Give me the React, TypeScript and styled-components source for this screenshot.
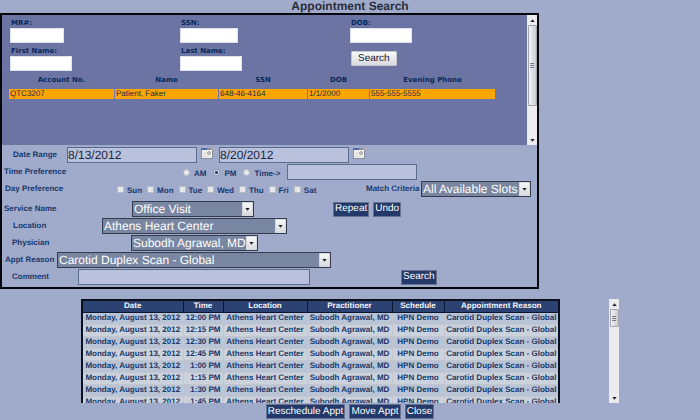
import React, { useId } from "react";
import styled, { createGlobalStyle } from "styled-components";

const GlobalStyle = createGlobalStyle`
  * { box-sizing: border-box; }
  body {
    margin: 0;
    background: #a0abcb;
    font-family: "Liberation Sans", Arial, sans-serif;
    color: #17386b;
    text-rendering: geometricPrecision;
  }
  input, select, button {
    font-family: inherit;
    text-rendering: inherit;
    margin: 0;
  }
`;

const Page = styled.main`
  display: flex;
  flex-direction: column;
`;

const Title = styled.h1`
  margin: 0;
  font-size: 12px;
  line-height: 13px;
  text-align: center;
  color: #2a2e3c;
`;

const SearchPanel = styled.section`
  width: 77%;
  border: 2px solid #05070d;
  padding-bottom: 2px;
`;

const PatientArea = styled.div`
  display: flex;
  height: 130px;
  background: #6b74a2;
`;

const PatientContent = styled.div`
  flex: 1;
  min-width: 0;
  padding: 4px 8px 0;
`;

const PatientForm = styled.form`
  display: grid;
  grid-template-columns: 170px 170px 1fr;
  row-gap: 4px;
`;

const PatientField = styled.div`
  display: flex;
  flex-direction: column;
  align-items: flex-start;
`;

const PatientLabel = styled.label`
  padding-left: 1px;
  font: bold 7px/9px "DejaVu Sans", Verdana, sans-serif;
  color: #06295c;
`;

const PatientInput = styled.input<{ $width: number }>`
  width: ${(p) => p.$width}px;
  height: 15px;
  border: 1px solid #dfe3ee;
  padding: 0 2px;
  background: #fff;
  font-size: 11px;
`;

const LightButton = styled.button`
  align-self: flex-start;
  margin: 4px 0 0 1px;
  height: 15px;
  padding: 0 6px;
  border: 1px solid #c3c6cf;
  border-radius: 1px;
  background: linear-gradient(#f8f8f8, #d8dadd);
  font-size: 10px;
  line-height: 13px;
  color: #10183a;
`;

const PatientTable = styled.table`
  width: 488px;
  margin: 1px 0 0 -2px;
  border-spacing: 1px 3px;
  table-layout: fixed;
  th {
    padding: 0;
    font: bold 7px/11px "DejaVu Sans", Verdana, sans-serif;
    color: #06295c;
  }
  td {
    padding: 0 1px;
    background: #ffa500;
    font-size: 8px;
    line-height: 10px;
    color: #17284f;
    white-space: nowrap;
  }
`;

const Criteria = styled.form`
  display: flex;
  flex-direction: column;
  gap: 1px;
  padding-top: 2px;
`;

const Row = styled.div<{ $indent: number; $gapAbove?: number }>`
  display: flex;
  align-items: center;
  height: 16px;
  padding-left: ${(p) => p.$indent}px;
  margin-top: ${(p) => p.$gapAbove ?? 0}px;
`;

const RowLabel = styled.label<{ $width: number }>`
  flex: none;
  width: ${(p) => p.$width}px;
  font-size: 8px;
  line-height: 10px;
  font-weight: bold;
  white-space: nowrap;
`;

const TextInput = styled.input<{ $width: number }>`
  width: ${(p) => p.$width}px;
  height: 16px;
  border: 1px solid #596d8f;
  padding: 0;
  background: #b9c1dc;
  font-size: 12px;
  color: #20273c;
`;

const CalendarButton = styled.button`
  display: flex;
  align-self: flex-start;
  width: 12px;
  height: 11px;
  padding: 0;
  margin: 1px 6px 0 4px;
  border: 0;
  background: none;
`;

const Options = styled.div<{ $gap: number }>`
  display: flex;
  align-items: center;
  gap: ${(p) => p.$gap}px;
`;

const Option = styled.label<{ $gap: number }>`
  display: flex;
  align-items: center;
  gap: ${(p) => p.$gap}px;
  font-size: 8px;
  line-height: 10px;
  font-weight: bold;
  span { padding-top: 3px; }
`;

const Radio = styled.input.attrs({ type: "radio" })`
  appearance: none;
  width: 7px;
  height: 7px;
  border: 1px solid #b3b7c2;
  border-radius: 50%;
  background: #e9ebef;
  &:checked {
    border-color: #8d9ab8;
    background: radial-gradient(circle, #1b3c6e 0 1px, #dfe6f2 2px);
  }
`;

const Check = styled.input.attrs({ type: "checkbox" })`
  appearance: none;
  width: 7px;
  height: 7px;
  border: 1px solid #b9bcc4;
  background: #e6e7ea;
  &:checked { background: #17386b; }
`;

const SelectBox = styled.div<{ $width: number }>`
  flex: none;
  display: grid;
  grid-template-columns: 1fr 11px;
  width: ${(p) => p.$width}px;
  height: 16px;
  border: 1px solid #343b4c;
  background: #7986a1;
`;

const Select = styled.select`
  grid-area: 1 / 1 / 2 / 3;
  appearance: none;
  width: 100%;
  border: 0;
  padding: 0 0 0 1px;
  background: none;
  font-size: 12px;
  line-height: 14px;
  color: #fff;
`;

const SelectArrow = styled.span`
  grid-area: 1 / 2 / 2 / 3;
  display: flex;
  align-items: center;
  justify-content: center;
  pointer-events: none;
  border: 1px solid #d5d8df;
  background: linear-gradient(#f7f7f8, #d9dbe0);
`;

const NavyButton = styled.button`
  height: 15px;
  padding: 0 1px;
  border: 1px solid #68738f;
  background: #223969;
  font-size: 10px;
  line-height: 12px;
  color: #fff;
  white-space: nowrap;
`;

const ButtonGroup = styled.div<{ $left: number }>`
  display: flex;
  gap: 4px;
  margin-left: ${(p) => p.$left}px;
`;

const MatchGroup = styled.div`
  display: flex;
  align-items: center;
  gap: 3px;
  margin: 0 6px 0 auto;
`;

const Results = styled.section`
  display: flex;
  align-items: flex-start;
  justify-content: space-between;
  height: 104px;
  margin: 10px 81px 0;
  overflow: hidden;
`;

const ResultTable = styled.table`
  width: 479px;
  table-layout: fixed;
  border-collapse: collapse;
  border: 2px solid #0c111d;
  th, td {
    height: 12px;
    padding: 0;
    font-size: 8px;
    line-height: 10px;
    text-align: center;
    white-space: nowrap;
    font-weight: bold;
  }
  th {
    background: #2c4272;
    border: 1px solid #0c1530;
    color: #f4f6fa;
  }
  td {
    border: 1px solid #c5c6cd;
    background: #b9c4d7;
    color: #17386b;
  }
  td:nth-child(2) { text-align: right; padding-right: 2px; }
  tbody tr:nth-child(even) td { background: #cbd2dc; }
`;

const Track = styled.div`
  flex: none;
  align-self: stretch;
  display: flex;
  flex-direction: column;
  align-items: center;
  width: 10px;
  background: #ececef;
`;

const TrackEnd = styled.span<{ $bottom?: boolean }>`
  display: flex;
  align-items: center;
  justify-content: center;
  height: 10px;
  margin-top: ${(p) => (p.$bottom ? "auto" : "0")};
`;

const Thumb = styled.span<{ $height: number }>`
  display: flex;
  align-items: center;
  justify-content: center;
  width: 9px;
  height: ${(p) => p.$height}px;
  border: 1px solid #a2a5ae;
  border-radius: 1px;
  background: linear-gradient(90deg, #f4f4f6, #c9cbd1);
`;

const Footer = styled.footer`
  display: flex;
  justify-content: center;
  gap: 4px;
  padding-top: 1px;
`;

function Arrow({ up }: { up?: boolean }) {
  return (
    <svg width="5" height="3" viewBox="0 0 5 3" aria-hidden="true">
      <path d={up ? "M.3 3 2.5 .3 4.7 3Z" : "M.3 0 2.5 2.7 4.7 0Z"} fill="#20232b" />
    </svg>
  );
}

function Scrollbar({ thumb }: { thumb: number }) {
  return (
    <Track aria-hidden="true">
      <TrackEnd><Arrow up /></TrackEnd>
      <Thumb $height={thumb}>
        <svg width="4" height="5" viewBox="0 0 4 5">
          <path d="M0 .5H4M0 2.5H4M0 4.5H4" stroke="#777b86" />
        </svg>
      </Thumb>
      <TrackEnd $bottom><Arrow /></TrackEnd>
    </Track>
  );
}

function Calendar({ label }: { label: string }) {
  return (
    <CalendarButton type="button" aria-label={label}>
      <svg width="12" height="11" viewBox="0 0 12 11">
        <rect x=".5" y=".5" width="11" height="10" fill="#f1efeb" stroke="#8a8e9c" />
        <path d="M0 1H6" stroke="#4f6da6" strokeWidth="2" />
        <path d="M6 1H10" stroke="#8b8c9c" strokeWidth="2" />
        <path d="M10 1H12" stroke="#c9a090" strokeWidth="2" />
        <path d="M2 4.5H6M2 6.5H6M2 8.5H9" stroke="#e2dfdb" />
        <circle cx="8" cy="5" r="1.5" fill="#cac7c6" stroke="#aba9ad" />
      </svg>
    </CalendarButton>
  );
}

function Field({ label, width }: { label: string; width: number }) {
  const id = useId();
  return (
    <PatientField>
      <PatientLabel htmlFor={id}>{label}</PatientLabel>
      <PatientInput id={id} $width={width} />
    </PatientField>
  );
}

function Dropdown({ id, width, value }: { id: string; width: number; value: string }) {
  return (
    <SelectBox $width={width}>
      <Select id={id} defaultValue={value}>
        <option>{value}</option>
      </Select>
      <SelectArrow><Arrow /></SelectArrow>
    </SelectBox>
  );
}

const days = ["Sun", "Mon", "Tue", "Wed", "Thu", "Fri", "Sat"];
const times = ["12:00 PM", "12:15 PM", "12:30 PM", "12:45 PM", "1:00 PM", "1:15 PM", "1:30 PM", "1:45 PM"];

export default function App() {
  return (
    <Page>
      <GlobalStyle />
      <Title>Appointment Search</Title>
      <SearchPanel>
        <PatientArea>
          <PatientContent>
            <PatientForm onSubmit={(e) => e.preventDefault()}>
              <Field label="MR#:" width={54} />
              <Field label="SSN:" width={58} />
              <Field label="DOB:" width={62} />
              <Field label="First Name:" width={62} />
              <Field label="Last Name:" width={62} />
              <div><LightButton>Search</LightButton></div>
            </PatientForm>
            <PatientTable>
              <colgroup>
                <col width="105" /><col width="103" /><col width="88" /><col width="61" /><col />
              </colgroup>
              <thead>
                <tr><th>Account No.</th><th>Name</th><th>SSN</th><th>DOB</th><th>Evening Phone</th></tr>
              </thead>
              <tbody>
                <tr><td>QTC3207</td><td>Patient, Faker</td><td>648-46-4164</td><td>1/1/2000</td><td>555-555-5555</td></tr>
              </tbody>
            </PatientTable>
          </PatientContent>
          <Scrollbar thumb={81} />
        </PatientArea>

        <Criteria onSubmit={(e) => e.preventDefault()}>
          <Row $indent={11}>
            <RowLabel htmlFor="from" $width={54}>Date Range</RowLabel>
            <TextInput id="from" $width={130} defaultValue="8/13/2012" />
            <Calendar label="Choose start date" />
            <TextInput aria-label="End date" $width={130} defaultValue="8/20/2012" />
            <Calendar label="Choose end date" />
          </Row>
          <Row $indent={2}>
            <RowLabel as="span" $width={179}>Time Preference</RowLabel>
            <Options $gap={7}>
              <Option $gap={4}><Radio name="time" /><span>AM</span></Option>
              <Option $gap={4}><Radio name="time" defaultChecked /><span>PM</span></Option>
              <Option $gap={4}><Radio name="time" /><span>Time-&gt;</span></Option>
              <TextInput aria-label="Specific time" $width={130} />
            </Options>
          </Row>
          <Row $indent={3}>
            <RowLabel as="span" $width={112}>Day Preference</RowLabel>
            <Options $gap={5}>
              {days.map((d) => (
                <Option key={d} $gap={3}><Check /><span>{d}</span></Option>
              ))}
            </Options>
            <MatchGroup>
              <RowLabel htmlFor="match" $width={52}>Match Criteria</RowLabel>
              <Dropdown id="match" width={110} value="All Available Slots" />
            </MatchGroup>
          </Row>
          <Row $indent={2} $gapAbove={3}>
            <RowLabel htmlFor="service" $width={128}>Service Name</RowLabel>
            <Dropdown id="service" width={122} value="Office Visit" />
            <ButtonGroup $left={79}>
              <NavyButton type="button">Repeat</NavyButton>
              <NavyButton type="button">Undo</NavyButton>
            </ButtonGroup>
          </Row>
          <Row $indent={11}>
            <RowLabel htmlFor="location" $width={89}>Location</RowLabel>
            <Dropdown id="location" width={185} value="Athens Heart Center" />
          </Row>
          <Row $indent={10}>
            <RowLabel htmlFor="physician" $width={119}>Physician</RowLabel>
            <Dropdown id="physician" width={127} value="Subodh Agrawal, MD" />
          </Row>
          <Row $indent={3}>
            <RowLabel htmlFor="reason" $width={52}>Appt Reason</RowLabel>
            <Dropdown id="reason" width={274} value="Carotid Duplex Scan - Global" />
          </Row>
          <Row $indent={10}>
            <RowLabel htmlFor="comment" $width={66}>Comment</RowLabel>
            <TextInput id="comment" $width={232} />
            <ButtonGroup $left={91}><NavyButton>Search</NavyButton></ButtonGroup>
          </Row>
        </Criteria>
      </SearchPanel>

      <Results>
        <ResultTable>
          <colgroup>
            <col width="101" /><col width="40" /><col width="84" /><col width="85" /><col width="52" /><col />
          </colgroup>
          <thead>
            <tr>
              <th>Date</th><th>Time</th><th>Location</th><th>Practitioner</th><th>Schedule</th><th>Appointment Reason</th>
            </tr>
          </thead>
          <tbody>
            {times.map((t) => (
              <tr key={t}>
                <td>Monday, August 13, 2012</td>
                <td>{t}</td>
                <td>Athens Heart Center</td>
                <td>Subodh Agrawal, MD</td>
                <td>HPN Demo</td>
                <td>Carotid Duplex Scan - Global</td>
              </tr>
            ))}
          </tbody>
        </ResultTable>
        <Scrollbar thumb={18} />
      </Results>
      <Footer>
        <NavyButton type="button">Reschedule Appt</NavyButton>
        <NavyButton type="button">Move Appt</NavyButton>
        <NavyButton type="button">Close</NavyButton>
      </Footer>
    </Page>
  );
}
